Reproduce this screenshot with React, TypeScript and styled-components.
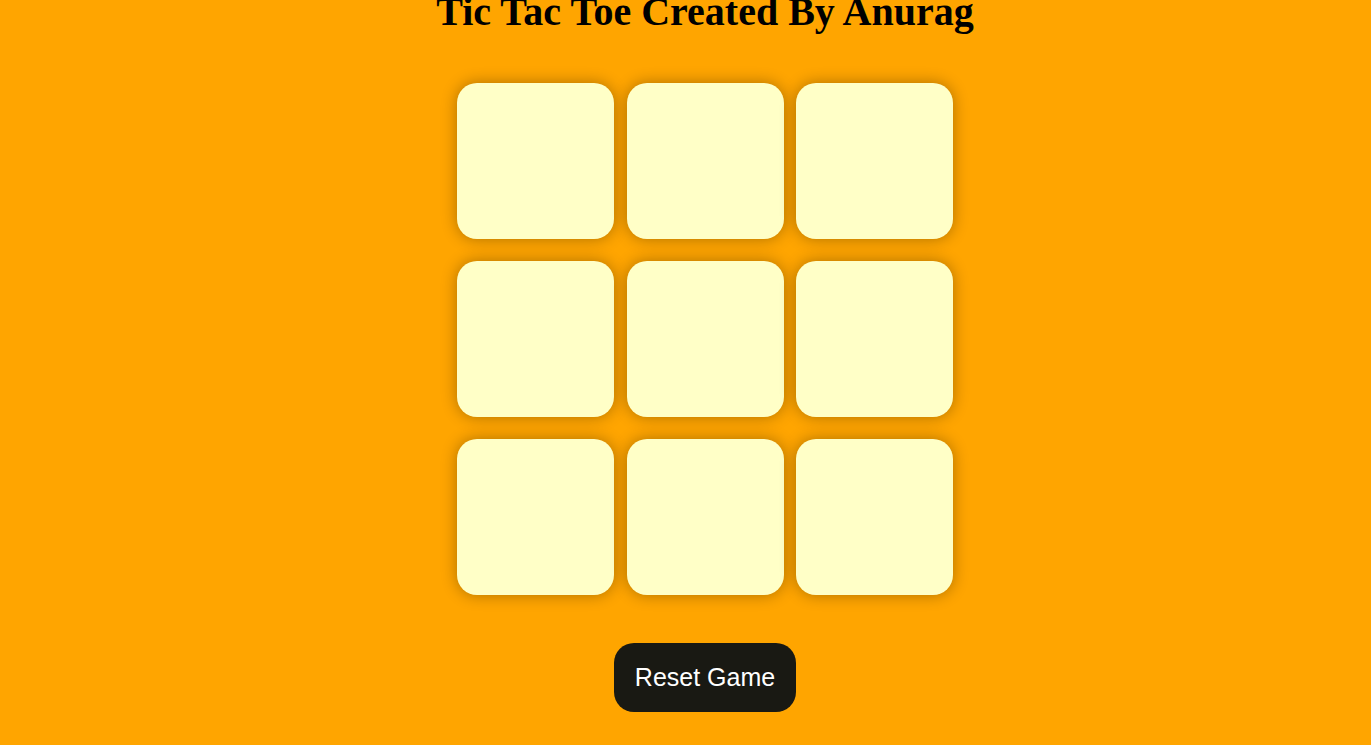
import React, { useState } from "react";
import styled, { createGlobalStyle } from "styled-components";

const GlobalStyle = createGlobalStyle`
  html, body {
    margin: 0;
    padding: 0;
    background: #ffa500;
    overflow: hidden;
  }
`;

const Main = styled.main`
  display: flex;
  flex-direction: column;
  align-items: center;
  padding-left: 39px;
  min-height: 745px;
  box-sizing: border-box;
`;

const Title = styled.h1`
  margin: -8.5px 0 0;
  font-family: "Liberation Serif", "Times New Roman", serif;
  font-weight: bold;
  font-size: 40px;
  line-height: 40px;
  color: #000;
  white-space: nowrap;
`;

const Board = styled.div`
  margin-top: 51.5px;
  display: grid;
  grid-template-columns: repeat(3, 157px);
  grid-auto-rows: 156px;
  column-gap: 12.5px;
  row-gap: 22px;
`;

const Cell = styled.button`
  border: none;
  border-radius: 20px;
  background: #ffffc7;
  box-shadow: 0 0 16px rgba(0, 0, 0, 0.32);
  font-family: "Liberation Sans", Arial, sans-serif;
  font-size: 60px;
  color: #b0413e;
  cursor: pointer;
  padding: 0;
`;

const ResetButton = styled.button`
  margin-top: 48px;
  padding: 20px 21px;
  border: none;
  border-radius: 20px;
  background: #191913;
  color: #fff;
  font-family: "Liberation Sans", Arial, sans-serif;
  font-size: 25px;
  line-height: 29px;
  cursor: pointer;
`;

export default function App() {
  const [cells, setCells] = useState<string[]>(Array(9).fill(""));
  const [turnO, setTurnO] = useState(true);

  const play = (i: number) => {
    if (cells[i]) return;
    const next = cells.slice();
    next[i] = turnO ? "O" : "X";
    setCells(next);
    setTurnO(!turnO);
  };

  return (
    <>
      <GlobalStyle />
      <Main>
        <Title>Tic Tac Toe Created By Anurag</Title>
        <Board>
          {cells.map((c, i) => (
            <Cell key={i} onClick={() => play(i)}>
              {c}
            </Cell>
          ))}
        </Board>
        <ResetButton
          onClick={() => {
            setCells(Array(9).fill(""));
            setTurnO(true);
          }}
        >
          Reset Game
        </ResetButton>
      </Main>
    </>
  );
}
